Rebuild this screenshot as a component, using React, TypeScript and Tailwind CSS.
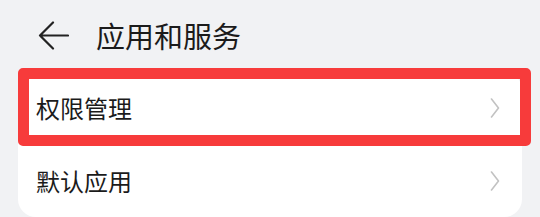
import React from "react";

const font = { fontFamily: '"Noto Sans CJK SC", "Noto Sans", sans-serif' };

function Chevron() {
  return (
    <svg width="10" height="20" viewBox="0 0 10 20" fill="none">
      <path d="M1.5 1 L8.5 10 L1.5 19" stroke="#c2c2c2" strokeWidth="1.6" strokeLinecap="round" strokeLinejoin="round" />
    </svg>
  );
}

export default function App() {
  return (
    <div className="relative h-[217px] w-[540px] overflow-hidden bg-[#f1f2f4]" style={font}>
      <div className="flex h-[72px] items-center pb-[2px]">
        <svg className="ml-[38px]" width="31" height="29" viewBox="0 0 31 29" fill="none">
          <path d="M2 14.5 H30 M15 1.5 L2 14.5 L15 27.5" stroke="#222222" strokeWidth="2.2" strokeLinecap="round" strokeLinejoin="round" />
        </svg>
        <div className="ml-[27px] text-[29px] leading-none text-[#1b1b1b]">应用和服务</div>
      </div>
      <div className="mx-[18px] w-[504px] rounded-[18px] bg-white">
        <div className="flex h-[72px] items-center justify-between pl-[18px] pr-[22px]">
          <span className="text-[24px] leading-none text-[#1b1b1b]">权限管理</span>
          <Chevron />
        </div>
        <div className="flex h-[73px] items-center justify-between pl-[18px] pr-[22px]">
          <span className="text-[24px] leading-none text-[#1b1b1b]">默认应用</span>
          <Chevron />
        </div>
      </div>
      <div className="absolute left-[18px] top-[68px] h-[78px] w-[513px] rounded-[5px] border-[11px] border-[#f73b3b]" />
    </div>
  );
}
